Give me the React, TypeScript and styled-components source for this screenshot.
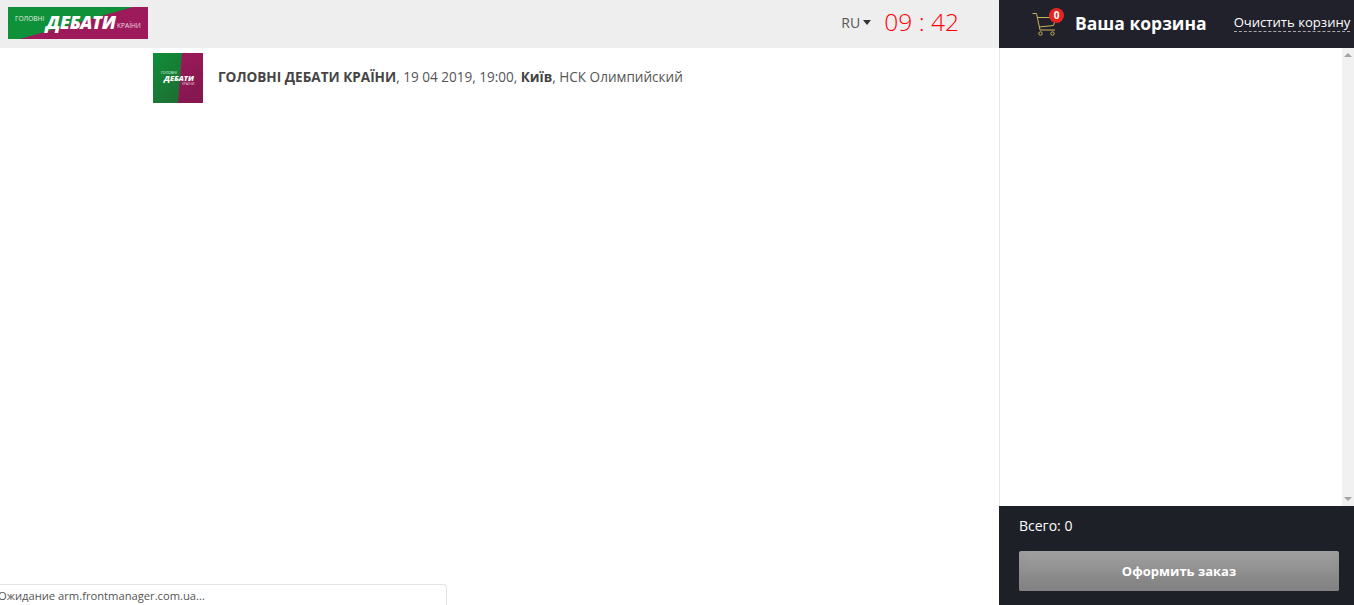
import * as React from 'react';
import styled, { createGlobalStyle } from 'styled-components';

const GlobalStyle = createGlobalStyle`
    html, body {
        margin: 0;
        padding: 0;
        height: 100%;
        overflow: hidden;
        background: #fff;
        font-family: "Open Sans", "Liberation Sans", sans-serif;
    }
    #root {
        height: 100%;
    }
`;

const Page = styled.div`
    display: flex;
    height: 605px;
    position: relative;
`;

const Main = styled.div`
    width: 999px;
    display: flex;
    flex-direction: column;
`;

const Header = styled.header`
    height: 48px;
    background: #eeeeee;
    display: flex;
    align-items: center;
    padding: 0 40px 2px 8px;
    box-sizing: border-box;
`;

const Lang = styled.div`
    margin-left: auto;
    margin-top: -2px;
    display: flex;
    align-items: center;
    font-size: 14px;
    color: #555;
`;

const Caret = styled.span`
    width: 0;
    height: 0;
    margin-left: 3px;
    border-left: 4.5px solid transparent;
    border-right: 4.5px solid transparent;
    border-top: 5px solid #333;
`;

const Clock = styled.div`
    margin-left: 13px;
    margin-top: -2px;
    font-size: 24.6px;
    font-weight: 300;
    line-height: 30px;
    color: #ff0000;
    white-space: pre;
`;

const EventRow = styled.div`
    display: flex;
    align-items: center;
    padding: 5px 0 0 153px;
`;

const Thumb = styled.svg`
    width: 50px;
    height: 50px;
    display: block;
`;

const EventText = styled.div`
    margin-left: 15px;
    margin-top: -2px;
    font-size: 13.56px;
    color: #555;
    b {
        font-weight: 700;
        color: #444;
    }
`;

const Cart = styled.aside`
    width: 355px;
    display: flex;
    flex-direction: column;
    box-sizing: border-box;
`;

const CartHeader = styled.div`
    height: 48px;
    background: #20212b;
    display: flex;
    align-items: center;
    padding-left: 33px;
    box-sizing: border-box;
`;

const CartIcon = styled.div`
    position: relative;
    width: 26px;
    height: 26px;
    margin-top: -2px;
`;

const Badge = styled.span`
    position: absolute;
    top: -2px;
    left: 17px;
    width: 15px;
    height: 15px;
    border-radius: 50%;
    background: #e52620;
    color: #fff;
    font-size: 10px;
    font-weight: 700;
    line-height: 15px;
    text-align: center;
`;

const CartTitle = styled.div`
    margin-left: 17px;
    margin-top: -2px;
    font-size: 17.5px;
    font-weight: 700;
    color: #fff;
    white-space: nowrap;
`;

const ClearLink = styled.a`
    margin-left: 27px;
    margin-top: -2px;
    font-size: 13.1px;
    line-height: 17px;
    color: #fff;
    border-bottom: 1px dashed #aaa;
    white-space: nowrap;
`;

const CartBody = styled.div`
    flex: 1;
    display: flex;
    justify-content: flex-end;
    border-left: 1px solid #e6e6e6;
`;

const Scrollbar = styled.div`
    width: 12px;
    background: #f1f1f1;
    display: flex;
    flex-direction: column;
    align-items: center;
    justify-content: space-between;
    padding: 5px 0;
    box-sizing: border-box;
`;

const Arrow = styled.span<{ $down?: boolean }>`
    width: 0;
    height: 0;
    border-left: 4px solid transparent;
    border-right: 4px solid transparent;
    border-top: ${(p) => (p.$down ? '4px solid #a3a3a3' : 'none')};
    border-bottom: ${(p) => (p.$down ? 'none' : '4px solid #a3a3a3')};
`;

const CartFooter = styled.div`
    height: 99px;
    background: #1d2027;
    padding: 10px 15px 0 20px;
    box-sizing: border-box;
    color: #fff;
`;

const Total = styled.div`
    font-size: 14px;
    line-height: 19px;
`;

const OrderButton = styled.button`
    display: block;
    width: 320px;
    height: 40px;
    margin-top: 16px;
    border: none;
    border-radius: 2px;
    background: linear-gradient(#a0a0a0, #808080);
    box-shadow: inset 0 -12px 14px -8px #848484;
    color: #fff;
    font-family: inherit;
    font-size: 13px;
    font-weight: 700;
    padding: 0;
`;

const StatusBubble = styled.div`
    position: absolute;
    left: -3px;
    bottom: 0;
    width: 450px;
    height: 21px;
    box-sizing: border-box;
    padding: 0;
    background: #fff;
    border: 1px solid #e3e3e3;
    border-bottom: none;
    border-radius: 0 4px 0 0;
    font-size: 11.2px;
    line-height: 21px;
    color: #555;
`;

const Logo = () => (
    <svg width="140" height="32" viewBox="0 0 140 32">
        <rect width="140" height="32" fill="#9d1b5a" />
        <polygon points="0,0 125,0 12,32 0,32" fill="#0e9138" />
        <text x="7" y="14" fontSize="6.6" fill="#e8efe8" fontFamily="Open Sans">ГОЛОВНІ</text>
        <text x="38" y="22" fontSize="18" fontWeight="800" fontStyle="italic" fill="#fff" fontFamily="Open Sans" textLength="70">ДЕБАТИ</text>
        <text x="109" y="21" fontSize="6.6" fill="#f0dce6" fontFamily="Open Sans">КРАЇНИ</text>
    </svg>
);

const ThumbLogo = () => (
    <Thumb viewBox="0 0 50 50">
        <defs>
            <linearGradient id="g" x1="0" y1="0" x2="0.6" y2="1">
                <stop offset="0" stopColor="#0f8f37" />
                <stop offset="1" stopColor="#1d7033" />
            </linearGradient>
            <linearGradient id="m" x1="0" y1="0" x2="0.6" y2="1">
                <stop offset="0" stopColor="#a01c5c" />
                <stop offset="1" stopColor="#861750" />
            </linearGradient>
        </defs>
        <rect width="50" height="50" fill="url(#m)" />
        <polygon points="0,0 29,0 25,50 0,50" fill="url(#g)" />
        <text x="8" y="21" fontSize="3.6" fill="#dfe" fontFamily="Open Sans">ГОЛОВНІ</text>
        <text x="11" y="28" fontSize="7.5" fontWeight="800" fontStyle="italic" fill="#fff" fontFamily="Open Sans">ДЕБАТИ</text>
        <text x="29" y="32" fontSize="3.4" fill="#ecd" fontFamily="Open Sans">КРАЇНИ</text>
    </Thumb>
);

const CartGlyph = () => (
    <svg width="26" height="26" viewBox="0 0 26 26" fill="none" stroke="#c9b458" strokeWidth="1">
        <path d="M0.5 3.5 H4.5 L8 20 H23" />
        <path d="M5.5 7.5 H24 L21.5 15.5 L7 17" />
        <circle cx="8.5" cy="23.5" r="1.7" />
        <circle cx="20.5" cy="23.5" r="1.7" />
    </svg>
);

export default function App() {
    return (
        <Page>
            <GlobalStyle />
            <Main>
                <Header>
                    <Logo />
                    <Lang>RU<Caret /></Lang>
                    <Clock>09 : 42</Clock>
                </Header>
                <EventRow>
                    <ThumbLogo />
                    <EventText>
                        <b>ГОЛОВНІ ДЕБАТИ КРАЇНИ</b>, 19 04 2019, 19:00, <b>Київ</b>, НСК Олимпийский
                    </EventText>
                </EventRow>
            </Main>
            <Cart>
                <CartHeader>
                    <CartIcon>
                        <CartGlyph />
                        <Badge>0</Badge>
                    </CartIcon>
                    <CartTitle>Ваша корзина</CartTitle>
                    <ClearLink>Очистить корзину</ClearLink>
                </CartHeader>
                <CartBody>
                    <Scrollbar>
                        <Arrow />
                        <Arrow $down />
                    </Scrollbar>
                </CartBody>
                <CartFooter>
                    <Total>Всего: 0</Total>
                    <OrderButton>Оформить заказ</OrderButton>
                </CartFooter>
            </Cart>
            <StatusBubble>Ожидание arm.frontmanager.com.ua...</StatusBubble>
        </Page>
    );
}
